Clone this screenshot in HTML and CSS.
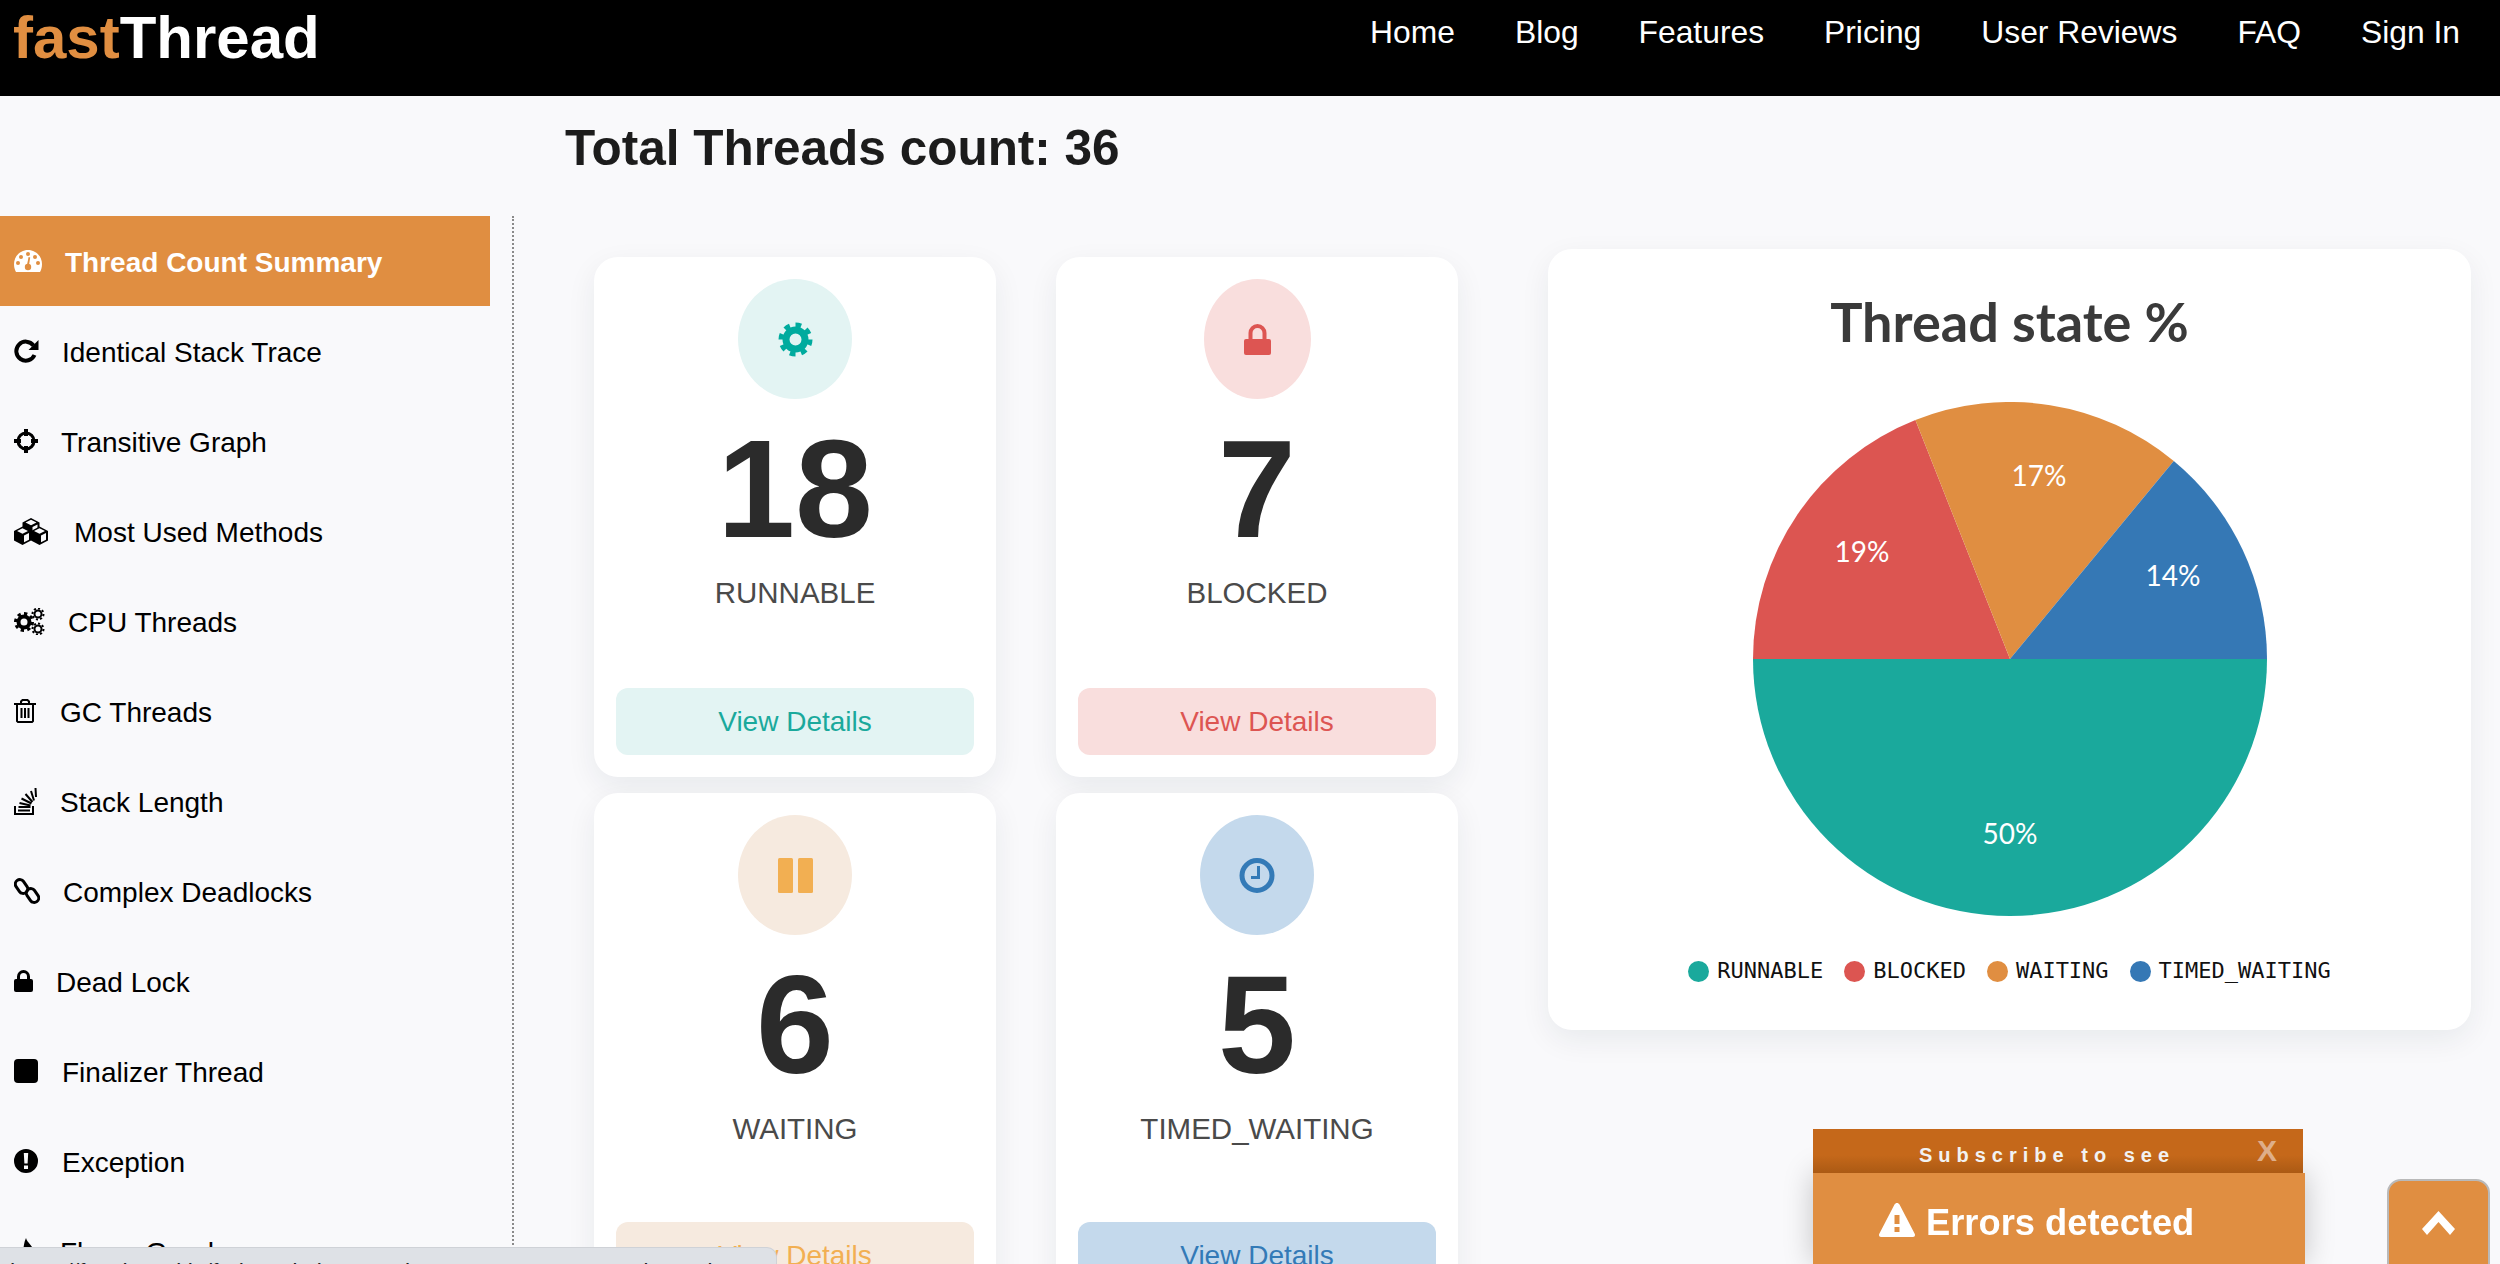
FILE: index.html
```html
<!DOCTYPE html>
<html lang="en">
<head>
<meta charset="utf-8">
<title>fastThread - Thread Count Summary</title>
<link rel="stylesheet" href="styles.css">
</head>
<body>
<header class="topbar">
  <a class="logo"><span class="logo-accent">fast</span>Thread</a>
  <nav class="topnav">
    <a>Home</a><a>Blog</a><a>Features</a><a>Pricing</a><a>User Reviews</a><a>FAQ</a><a>Sign In</a>
  </nav>
</header>

<main class="page">
  <h1 class="page-title">Total Threads count: 36</h1>
  <div class="layout">
    <aside class="sidebar">
      <a class="side-item side-item-active">
        <svg width="28" height="22" viewBox="0 0 28 22"><path class="ic" d="M14 0C6.3 0 0 6.3 0 14c0 3 .7 5.7 2 8h24c1.300-2.300 2-5 2-8C28 6.300 21.700 0 14 0z"/><g class="ic-hole"><circle cx="14" cy="4" r="2"/><circle cx="7" cy="7" r="2"/><circle cx="21" cy="7" r="2"/><circle cx="4" cy="13" r="2"/><circle cx="24" cy="13" r="2"/><circle cx="14" cy="17" r="3.200"/><path d="M12.800 16l1.800-9 1.600.4-1.400 9z"/></g></svg>
        <span>Thread Count Summary</span>
      </a>
      <a class="side-item">
        <svg width="25" height="24" viewBox="0 0 25 24"><path class="ic-line ic-w4" d="M19.500 6.500A9.500 9.500 0 1 0 20.500 16"/><path class="ic" d="M24.500 1v10h-10z"/></svg>
        <span>Identical Stack Trace</span>
      </a>
      <a class="side-item">
        <svg width="24" height="24" viewBox="0 0 24 24"><circle class="ic-line ic-w3" cx="12" cy="12" r="8"/><path class="ic-line ic-w4" d="M12 0v7M12 17v7M0 12h7M17 12h7"/></svg>
        <span>Transitive Graph</span>
      </a>
      <a class="side-item">
        <svg width="37" height="27" viewBox="0 0 37 27">
          <defs><g id="cube"><path class="ic" d="M0 4.500L8.500 0 17 4.500V14l-8.500 4.500L0 14z"/><path class="ic-clear" d="M8.500 1.800L14 4.500 8.500 7.300 3 4.500zM10 9l5-2.500v6.700L10 15.800z"/></g></defs>
          <use href="#cube" x="8.500" y="0"/><use href="#cube" x="0" y="8.500"/><use href="#cube" x="17" y="8.500"/>
        </svg>
        <span>Most Used Methods</span>
      </a>
      <a class="side-item">
        <svg width="31" height="27" viewBox="0 0 31 27">
          <circle class="ic-line ic-w4" cx="10" cy="14" r="5.500"/><circle class="ic-line ic-w3 ic-teeth" pathLength="16" cx="10" cy="14" r="8.500"/>
          <circle class="ic-line ic-w2" cx="24" cy="6" r="3.500"/><circle class="ic-line ic-w2 ic-teeth" pathLength="16" cx="24" cy="6" r="5.500"/>
          <circle class="ic-line ic-w2" cx="24" cy="21" r="3.500"/><circle class="ic-line ic-w2 ic-teeth" pathLength="16" cx="24" cy="21" r="5.500"/>
        </svg>
        <span>CPU Threads</span>
      </a>
      <a class="side-item">
        <svg width="23" height="24" viewBox="0 0 23 24"><path class="ic-line ic-w2" d="M0 5h22M7 5V2.500L8.500 1h5L15 2.500V5M3 5v17l1 1h14l1-1V5M7.500 9v10M11 9v10M14.500 9v10"/></svg>
        <span>GC Threads</span>
      </a>
      <a class="side-item">
        <svg width="23" height="28" viewBox="0 0 23 28"><path class="ic-line ic-w2" d="M1 19v8h18v-8M4 23.500h12M4.500 20h12M5.500 16l11 2.500M7.500 11.500l10 5M11.500 7l7 8M17 4l3 9.500M21.500 1l.5 9"/></svg>
        <span>Stack Length</span>
      </a>
      <a class="side-item">
        <svg width="26" height="26" viewBox="0 0 26 26"><rect class="ic-line ic-w3" x="3" y="1" width="9" height="15" rx="4.500" transform="rotate(-35 7.500 8.500)"/><rect class="ic-line ic-w3" x="14" y="10" width="9" height="15" rx="4.500" transform="rotate(-35 18.500 17.500)"/></svg>
        <span>Complex Deadlocks</span>
      </a>
      <a class="side-item">
        <svg width="19" height="22" viewBox="0 0 19 22"><path class="ic-line ic-w3" d="M4.500 10V6.500a5 5 0 0 1 10 0V10"/><rect class="ic" x="0" y="9" width="19" height="13" rx="2"/></svg>
        <span>Dead Lock</span>
      </a>
      <a class="side-item">
        <svg width="25" height="24" viewBox="0 0 25 24"><rect class="ic" x="0" y="0" width="24" height="24" rx="4"/></svg>
        <span>Finalizer Thread</span>
      </a>
      <a class="side-item">
        <svg width="25" height="24" viewBox="0 0 25 24"><path class="ic" fill-rule="evenodd" d="M12 0a12 12 0 1 1 0 24 12 12 0 0 1 0-24zM9.800 4l.6 10.500h3.200L14.200 4zM10 16.500V20h4v-3.500z"/></svg>
        <span>Exception</span>
      </a>
      <a class="side-item">
        <svg width="23" height="26" viewBox="0 0 23 26"><path class="ic" d="M12 0c1 5 8 8 8 15 0 6-4 10-9 10S3 21 3 16c0-3 2-5 3-7 1 2 2 3 3 3 1-4 1-8 3-12z"/></svg>
        <span>Flame Graph</span>
      </a>
    </aside>

    <section class="cards">
      <article class="card card-teal">
        <div class="badge">
          <svg width="35" height="35" viewBox="0 0 35 35"><circle class="ic-line gear-ring" cx="17.500" cy="17.500" r="9.500"/><circle class="ic-line gear-teeth ic-teeth" pathLength="16" cx="17.500" cy="17.500" r="14.500"/></svg>
        </div>
        <div class="count">18</div>
        <div class="state">RUNNABLE</div>
        <a class="details">View Details</a>
      </article>
      <article class="card card-red">
        <div class="badge badge-narrow">
          <svg width="27" height="31" viewBox="0 0 27 31"><path class="ic-line lock-arc" d="M6.500 16V9a7 7 0 0 1 14 0v7"/><rect class="ic-solid" x="0" y="15" width="27" height="16" rx="2"/></svg>
        </div>
        <div class="count">7</div>
        <div class="state">BLOCKED</div>
        <a class="details">View Details</a>
      </article>
      <article class="card card-orange">
        <div class="badge">
          <svg width="35" height="35" viewBox="0 0 35 35"><rect class="ic-solid" x="0" y="0" width="15" height="35" rx="1.500"/><rect class="ic-solid" x="20" y="0" width="15" height="35" rx="1.500"/></svg>
        </div>
        <div class="count">6</div>
        <div class="state">WAITING</div>
        <a class="details">View Details</a>
      </article>
      <article class="card card-blue">
        <div class="badge">
          <svg width="36" height="35" viewBox="0 0 36 35"><circle class="ic-line clock-ring" cx="18" cy="17.500" r="15"/><path class="ic-line clock-hand" d="M19.500 8v11.500H12"/></svg>
        </div>
        <div class="count">5</div>
        <div class="state">TIMED_WAITING</div>
        <a class="details">View Details</a>
      </article>
    </section>

    <section class="pie-card">
      <h2 class="pie-title">Thread state %</h2>
      <svg class="pie" width="514" height="514" viewBox="0 0 514 514">
        <path class="slice-teal" d="M257 257H514A257 257 0 0 1 0 257Z"/>
        <path class="slice-red" d="M257 257H0A257 257 0 0 1 162.400 18Z"/>
        <path class="slice-orange" d="M257 257L162.400 18A257 257 0 0 1 420.800 59Z"/>
        <path class="slice-blue" d="M257 257L420.800 59A257 257 0 0 1 514 257Z"/>
        <text class="pie-label" x="257" y="431">50%</text>
        <text class="pie-label" x="109" y="149">19%</text>
        <text class="pie-label" x="286" y="73">17%</text>
        <text class="pie-label" x="420" y="173">14%</text>
      </svg>
      <ul class="legend">
        <li class="legend-item"><i class="dot dot-teal"></i>RUNNABLE</li>
        <li class="legend-item"><i class="dot dot-red"></i>BLOCKED</li>
        <li class="legend-item"><i class="dot dot-orange"></i>WAITING</li>
        <li class="legend-item"><i class="dot dot-blue"></i>TIMED_WAITING</li>
      </ul>
    </section>
  </div>
</main>

<div class="status-bubble">https://fastthread.io/ft-threads-by-state.jsp?state=BLOCKED&amp;dumpId=1</div>

<aside class="promo">
  <div class="promo-head"><span>Subscribe to see</span><b class="promo-close">X</b></div>
  <div class="promo-body">
    <svg width="36" height="34" viewBox="0 0 36 34"><path class="ic-white" fill-rule="evenodd" d="M18 0c1 0 2 .6 2.500 1.600L35.800 31c.6 1.500-.2 3-1.800 3H2C.4 34-.4 32.500.2 31L15.500 1.600C16 .6 17 0 18 0zM15.500 12v9h5v-9zM15.500 24v5h5v-5z"/></svg>
    <span>Errors detected</span>
  </div>
</aside>

<a class="to-top">
  <svg width="33" height="24" viewBox="0 0 33 24"><path class="ic-white" d="M16.500 0L33 18l-5 6-11.500-13L5 24l-5-6z"/></svg>
</a>
</body>
</html>
```

FILE: styles.css
```css
* { box-sizing: border-box; }
html, body { margin: 0; height: 100%; }
body {
  width: 2500px;
  height: 1264px;
  overflow: hidden;
  background: #f9f9fb;
  font-family: "Liberation Sans", Arial, sans-serif;
  color: #000;
}

/* top bar */
.topbar {
  height: 96px;
  background: #000;
  display: flex;
  justify-content: space-between;
  align-items: flex-start;
  padding: 0 40px 0 13px;
}
.logo {
  font-size: 60px;
  font-weight: 700;
  line-height: 76px;
  color: #fff;
}
.logo-accent { color: #e08e41; }
.topnav {
  display: flex;
  gap: 60px;
  font-size: 31.800px;
  line-height: 64px;
  color: #fff;
}

/* page */
.page { height: 1168px; }
.page-title {
  margin: 0;
  height: 120px;
  padding-left: 565px;
  font-size: 49.500px;
  font-weight: 700;
  line-height: 104px;
  color: #1c1c1c;
}
.layout { display: flex; align-items: flex-start; }

/* sidebar */
.sidebar {
  width: 514px;
  height: 1048px;
  flex: none;
  border-right: 2px dotted #8a8a8a;
  overflow: hidden;
}
.side-item {
  width: 490px;
  height: 90px;
  display: flex;
  align-items: center;
  gap: 23px;
  padding-left: 14px;
  font-size: 28px;
  color: #000;
}
.side-item span { padding-top: 3px; }
.side-item svg { flex: none; }
.side-item-active {
  background: #e08e41;
  color: #fff;
  font-weight: 700;
}
.ic { fill: #000; }
.ic-clear { fill: #f9f9fb; }
.side-item-active .ic { fill: #fff; }
.ic-hole { fill: #e08e41; }
.ic-line { fill: none; stroke: #000; }
.ic-w2 { stroke-width: 2; }
.ic-w3 { stroke-width: 3; }
.ic-w4 { stroke-width: 4; }
.ic-teeth { stroke-dasharray: 1 1; }
.ic-white { fill: #fff; }

/* state cards */
.cards {
  flex: none;
  display: grid;
  grid-template-columns: 402px 402px;
  grid-template-rows: 520px 518px;
  gap: 16px 60px;
  margin: 41px 0 0 80px;
}
.card {
  display: flex;
  flex-direction: column;
  align-items: center;
  padding: 22px 22px 22px;
  background: #fff;
  border-radius: 24px;
  box-shadow: 0 10px 30px rgba(18, 38, 63, 0.07);
}
.badge {
  width: 114px;
  height: 120px;
  flex: none;
  border-radius: 50%;
  display: flex;
  align-items: center;
  justify-content: center;
}
.badge-narrow { width: 107px; }
.count {
  margin-top: 20px;
  font-size: 140px;
  line-height: 140px;
  font-weight: 700;
  color: #2b2b2b;
}
.state {
  margin-top: 16px;
  font-size: 29.500px;
  line-height: 36px;
  color: #4a4a4a;
}
.details {
  margin-top: auto;
  width: 100%;
  height: 67px;
  flex: none;
  border-radius: 12px;
  text-align: center;
  font-size: 28px;
  line-height: 67px;
}
.card-teal .badge, .card-teal .details { background: #e3f4f3; }
.card-teal .details { color: #1aa99c; }
.card-red .badge, .card-red .details { background: #f9dedd; }
.card-red .details { color: #dd5552; }
.card-orange .badge, .card-orange .details { background: #f6eadf; }
.card-orange .details { color: #f2af52; }
.card-blue .badge, .card-blue .details { background: #c4d9ec; }
.card-blue .details { color: #337ab7; }

.gear-ring { stroke: #00ab9e; stroke-width: 7; }
.gear-teeth { stroke: #00ab9e; stroke-width: 5; }
.lock-arc { stroke: #dd5552; stroke-width: 4; }
.card-red .ic-solid { fill: #dd5552; }
.card-orange .ic-solid { fill: #f2af52; }
.clock-ring { stroke: #337ab7; stroke-width: 5; }
.clock-hand { stroke: #337ab7; stroke-width: 3; }

/* pie */
.pie-card {
  flex: none;
  width: 923px;
  height: 781px;
  margin: 33px 0 0 90px;
  padding-top: 38px;
  display: flex;
  flex-direction: column;
  align-items: center;
  background: #fff;
  border-radius: 24px;
  box-shadow: 0 10px 30px rgba(18, 38, 63, 0.07);
}
.pie-title {
  margin: 0;
  font-family: Lato, sans-serif;
  font-size: 54px;
  font-weight: 700;
  line-height: 70px;
  color: #3a3a3a;
}
.pie { display: block; margin-top: 45px; flex: none; }
.slice-teal { fill: #1aa99c; }
.slice-red { fill: #dc5551; }
.slice-orange { fill: #e08e41; }
.slice-blue { fill: #3578b5; }
.pie-label {
  font-family: Lato, sans-serif;
  font-size: 28px;
  fill: #fff;
  text-anchor: middle;
  dominant-baseline: central;
}
.legend {
  list-style: none;
  display: flex;
  gap: 21px;
  margin: 41px 0 0;
  padding: 0;
  font-family: "DejaVu Sans Mono", monospace;
  font-size: 22px;
  line-height: 28px;
  color: #111;
}
.legend-item { display: flex; align-items: center; gap: 8px; }
.dot { width: 21px; height: 21px; border-radius: 50%; }
.dot-teal { background: #1aa99c; }
.dot-red { background: #dc5551; }
.dot-orange { background: #e08e41; }
.dot-blue { background: #3578b5; }

/* overlays */
.status-bubble {
  position: fixed;
  left: 0;
  bottom: 0;
  width: 777px;
  height: 17px;
  overflow: hidden;
  padding: 11px 0 0 10px;
  background: #dee1e6;
  border-top: 1px solid #cfd2d7;
  border-right: 1px solid #cfd2d7;
  border-top-right-radius: 10px;
  font-size: 23px;
  line-height: 28px;
  color: #202124;
  white-space: nowrap;
}
.promo {
  position: fixed;
  right: 195px;
  bottom: 0;
  width: 492px;
  height: 135px;
}
.promo-head {
  position: relative;
  width: 490px;
  height: 44px;
  padding: 9px 22px 0 0;
  text-align: center;
  background: linear-gradient(#c5681a 60%, #ab5a14);
  color: #f2f2f2;
  font-size: 20px;
  font-weight: 700;
  letter-spacing: 6px;
  line-height: 34px;
}
.promo-close {
  position: absolute;
  right: 26px;
  top: 5px;
  letter-spacing: 0;
  font-size: 30px;
  color: #deae89;
}
.promo-body {
  height: 91px;
  padding: 30px 0 0 66px;
  display: flex;
  align-items: flex-start;
  gap: 11px;
  background: #e08e41;
  color: #fff;
  font-size: 36.300px;
  font-weight: 700;
  line-height: 40px;
  box-shadow: 0 0 30px rgba(0, 0, 0, 0.22);
}
.to-top {
  position: fixed;
  right: 10px;
  bottom: -15px;
  width: 103px;
  height: 100px;
  padding-top: 30px;
  display: flex;
  justify-content: center;
  align-items: flex-start;
  background: #e08e41;
  border: 2px solid #b9b9b9;
  border-radius: 14px;
}
```
